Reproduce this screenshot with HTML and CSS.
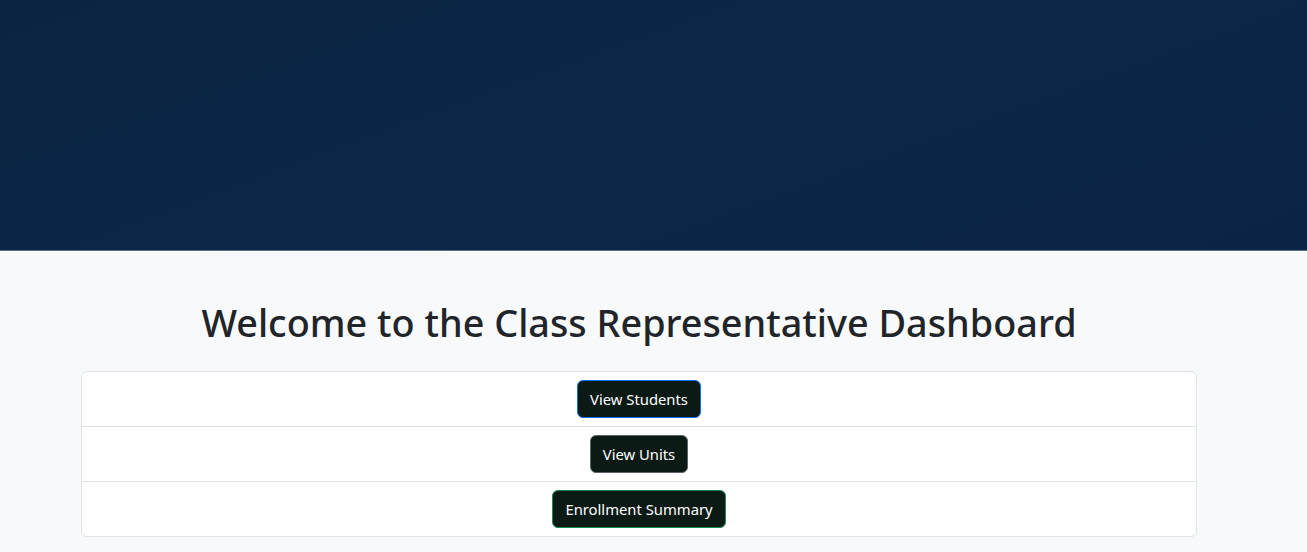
FILE: index.html
```html
<!DOCTYPE html>
<html lang="en">
<head>
<meta charset="utf-8">
<title>Class Representative Dashboard</title>
<link rel="stylesheet" href="styles.css">
</head>
<body>
<header class="hero"></header>
<main class="page">
  <div class="container">
    <h1 class="title">Welcome to the Class Representative Dashboard</h1>
    <ul class="list">
      <li class="list-item"><button class="btn btn-blue">View Students</button></li>
      <li class="list-item"><button class="btn btn-gray">View Units</button></li>
      <li class="list-item"><button class="btn btn-green">Enrollment Summary</button></li>
    </ul>
  </div>
</main>
</body>
</html>
```
FILE: styles.css
```css
html, body {
  margin: 0;
  padding: 0;
}
body {
  background: #f8f9fa;
  font-family: "Noto Sans", "Open Sans", sans-serif;
  color: #212529;
  height: 552px;
  overflow: hidden;
}
.hero {
  box-sizing: border-box;
  height: 251px;
  background: linear-gradient(160deg, #0b2442 0%, #0c2747 50%, #0b2443 100%);
  border-bottom: 1px solid #5d7186;
}
.page {
  padding-left: 81px;
}
.container {
  width: 1116px;
  padding-top: 48px;
}
.title {
  margin: 0 0 24px;
  font-size: 37.8px;
  font-weight: 500;
  line-height: 48px;
  text-align: center;
  color: #212529;
}
.list {
  list-style: none;
  margin: 0;
  padding: 0;
  background: #fff;
  border: 1px solid #dee2e6;
  border-radius: 6px;
}
.list-item {
  padding: 8px 16px;
  display: flex;
  justify-content: center;
  border-top: 1px solid #dee2e6;
}
.list-item:first-child {
  border-top: none;
}
.btn {
  font-family: inherit;
  font-size: 14.8px;
  line-height: 24px;
  padding: 6px 12px;
  height: 38px;
  color: #fff;
  background: #0c1a15;
  border: 1px solid #0c1a15;
  border-radius: 6px;
  cursor: pointer;
}
.btn-blue { border-color: #0d6efd; }
.btn-gray { border-color: #5c636a; }
.btn-green { border-color: #198754; }
```
